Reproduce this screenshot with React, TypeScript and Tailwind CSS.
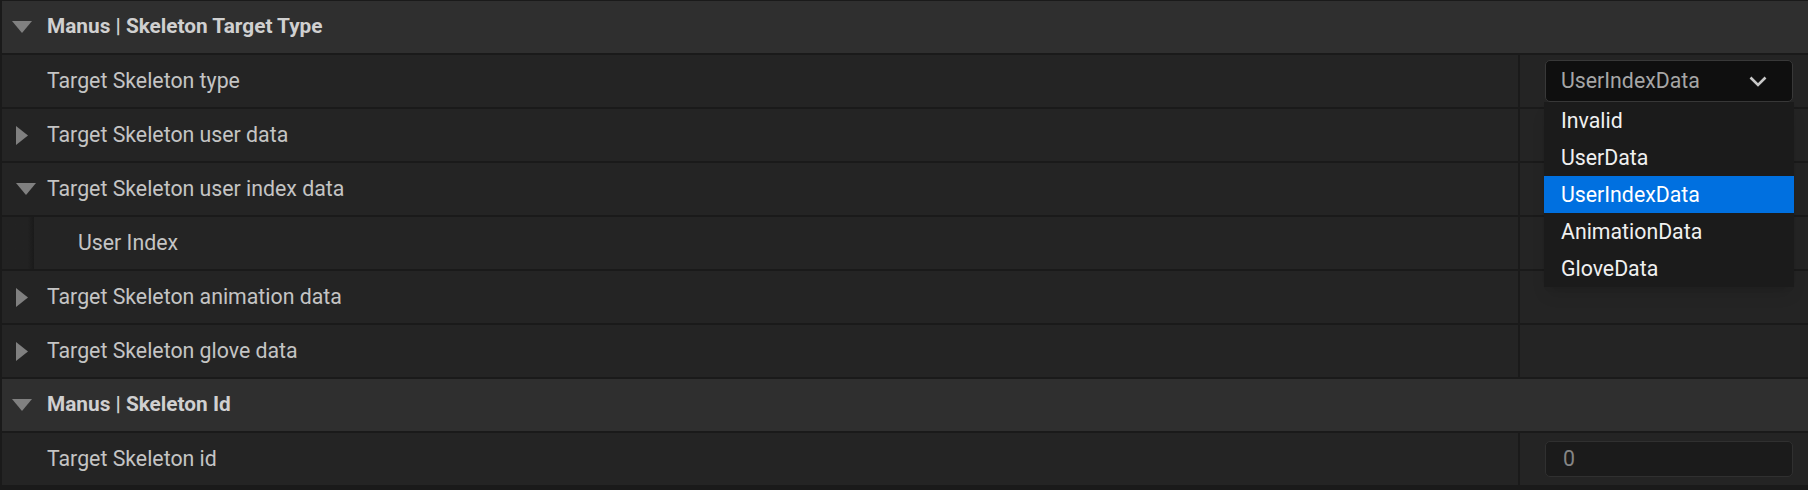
import React from 'react';

const DownArrow = () => (
  <svg width="20" height="12" viewBox="0 0 20 12" className="shrink-0">
    <polygon points="0,0 20,0 10,12" fill="#808080" />
  </svg>
);

const RightArrow = () => (
  <svg width="12" height="19" viewBox="0 0 12 19" className="shrink-0">
    <polygon points="0,0 12,9.5 0,19" fill="#808080" />
  </svg>
);

const Header = ({ title }: { title: string }) => (
  <div className="flex h-[52px] items-center bg-[#2f2f2f] pl-[10px]">
    <DownArrow />
    <span className="ml-[15px] text-[20.8px] font-bold text-[#d0d0d0]">{title}</span>
  </div>
);

type RowProps = {
  label: string;
  arrow?: 'right' | 'down';
  indent?: boolean;
  value?: React.ReactNode;
};

const Row = ({ label, arrow, indent, value }: RowProps) => (
  <div className="flex h-[52px] gap-[2px]">
    <div className="flex flex-1 bg-[#242424]">
      {indent ? (
        <>
          <div className="w-[32px] shrink-0 bg-gradient-to-r from-[#222222] from-80% to-[#1a1a1a]" />
          <div className="flex flex-1 items-center pl-[44px]">
            <span className="text-[21.3px] text-[#c4c4c4]">{label}</span>
          </div>
        </>
      ) : (
        <div className="flex flex-1 items-center pl-[14px]">
          <div className="flex w-[31px] shrink-0 items-center">
            {arrow === 'right' && <RightArrow />}
            {arrow === 'down' && <DownArrow />}
          </div>
          <span className="text-[21.3px] text-[#c4c4c4]">{label}</span>
        </div>
      )}
    </div>
    <div className="flex w-[288px] shrink-0 items-center bg-[#242424] pl-[25px] pr-[15px]">
      {value}
    </div>
  </div>
);

const options = ['Invalid', 'UserData', 'UserIndexData', 'AnimationData', 'GloveData'];

export default function App() {
  return (
    <div className="relative h-[490px] w-[1808px] overflow-hidden bg-[#1a1a1a] font-['Roboto',sans-serif]">
      <div className="flex flex-col gap-[2px] pl-[2px] pt-[1px]">
        <Header title="Manus | Skeleton Target Type" />
        <Row
          label="Target Skeleton type"
          value={
            <div className="flex h-[42px] w-full items-center justify-between rounded-[5px] border border-[#383838] bg-[#0f0f0f] pl-[15px] pr-[25px]">
              <span className="text-[21.3px] text-[#a6a6a6]">UserIndexData</span>
              <svg width="18" height="11" viewBox="0 0 18 11">
                <path d="M1.5 1.5 L9 9 L16.5 1.5" fill="none" stroke="#c8c8c8" strokeWidth="2.6" />
              </svg>
            </div>
          }
        />
        <Row label="Target Skeleton user data" arrow="right" />
        <Row label="Target Skeleton user index data" arrow="down" />
        <Row label="User Index" indent />
        <Row label="Target Skeleton animation data" arrow="right" />
        <Row label="Target Skeleton glove data" arrow="right" />
        <Header title="Manus | Skeleton Id" />
        <Row
          label="Target Skeleton id"
          value={
            <div className="flex h-[36px] w-full items-center rounded-[5px] border border-[#303030] bg-[#1b1b1b] pl-[17px]">
              <span className="text-[21.3px] text-[#858585]">0</span>
            </div>
          }
        />
      </div>

      {/* open dropdown menu */}
      <div className="absolute left-[1544px] top-[102px] w-[250px] bg-[#1b1b1b] shadow-lg">
        {options.map((o) => (
          <div
            key={o}
            className={`flex h-[37px] items-center pl-[17px] text-[21.3px] ${
              o === 'UserIndexData' ? 'bg-[#0070e0] text-white' : 'text-[#f0f0f0]'
            }`}
          >
            {o}
          </div>
        ))}
      </div>
    </div>
  );
}
